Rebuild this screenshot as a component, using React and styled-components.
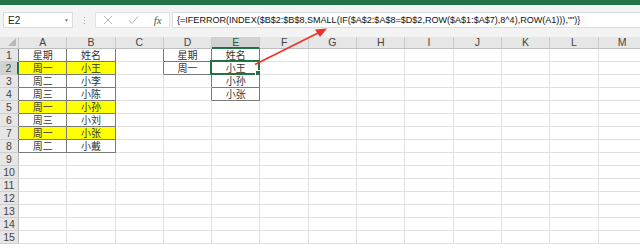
import React from 'react';
import styled, { createGlobalStyle } from 'styled-components';

const GlobalStyle = createGlobalStyle`
  html, body {
    margin: 0;
    padding: 0;
    background: #ffffff;
  }
  body {
    font-family: 'Liberation Sans', 'Noto Sans CJK SC', sans-serif;
  }
`;

const COL_W = 48.3;
const ROW_H = 13;
const COLS = ['A', 'B', 'C', 'D', 'E', 'F', 'G', 'H', 'I', 'J', 'K', 'L', 'M'];
const ROWS = 15;

// cell contents keyed by "A1" style address
const cells = {
  A1: '星期', B1: '姓名',
  A2: '周一', B2: '小王',
  A3: '周二', B3: '小李',
  A4: '周三', B4: '小陈',
  A5: '周一', B5: '小孙',
  A6: '周三', B6: '小刘',
  A7: '周一', B7: '小张',
  A8: '周二', B8: '小戴',
  D1: '星期', D2: '周一',
  E1: '姓名', E2: '小王', E3: '小孙', E4: '小张',
};

const yellowRows = [2, 5, 7];

const isBoxed = (r, c) => {
  if (c < 0 || r < 1) return false;
  if ((c === 0 || c === 1) && r >= 1 && r <= 8) return true;
  if (c === 3 && r >= 1 && r <= 2) return true;
  if (c === 4 && r >= 1 && r <= 4) return true;
  return false;
};

const Page = styled.div`
  position: relative;
  width: 640px;
  height: 249px;
  overflow: hidden;
  background: #ffffff;
`;

const TitleStrip = styled.div`
  height: 5px;
  background: #217346;
`;

const Toolbar = styled.div`
  display: flex;
  align-items: center;
  height: 30px;
  padding: 0 0 0 3px;
  background: #f3f3f3;
`;

const NameBox = styled.div`
  display: flex;
  align-items: center;
  justify-content: space-between;
  width: 70px;
  height: 16px;
  box-sizing: border-box;
  padding: 0 3px 0 4px;
  background: #ffffff;
  border: 1px solid #dcdcdc;
  font-size: 10px;
  color: #222;
`;

const Caret = styled.span`
  font-size: 5px;
  color: #777;
`;

const Grip = styled.div`
  width: 22px;
  display: flex;
  flex-direction: column;
  align-items: center;
  gap: 2px;
  & > i {
    display: block;
    width: 1px;
    height: 1px;
    background: #a8a8a8;
  }
`;

const ButtonBox = styled.div`
  display: flex;
  align-items: center;
  justify-content: space-around;
  width: 75px;
  height: 16px;
  box-sizing: border-box;
  background: #ffffff;
  border: 1px solid #e2e2e2;
  margin-right: 2px;
`;

const Fx = styled.span`
  font-family: 'Liberation Serif', serif;
  font-style: italic;
  font-size: 11px;
  color: #555;
`;

const FormulaBox = styled.div`
  flex: 1;
  height: 16px;
  box-sizing: border-box;
  display: flex;
  align-items: center;
  padding-left: 4px;
  background: #ffffff;
  border: 1px solid #dcdcdc;
  border-right: none;
  font-size: 9.05px;
  color: #111;
  white-space: nowrap;
  overflow: hidden;
`;

const Gap = styled.div`
  height: 2px;
  background: #f3f3f3;
`;

const Sheet = styled.div`
  display: grid;
  grid-template-columns: 19px repeat(${COLS.length}, ${COL_W}px);
  grid-template-rows: 12px repeat(${ROWS}, ${ROW_H}px);
`;

const Corner = styled.div`
  position: relative;
  background: #e6e6e6;
  border-right: 1px solid #c8c8c8;
  border-bottom: 1px solid #bdbdbd;
  &::after {
    content: '';
    position: absolute;
    right: 2px;
    bottom: 2px;
    border-left: 8px solid transparent;
    border-bottom: 8px solid #b9b9b9;
  }
`;

const ColHead = styled.div`
  display: flex;
  align-items: center;
  justify-content: center;
  box-sizing: border-box;
  line-height: 1;
  font-size: 10.5px;
  color: ${(p) => (p.active ? '#1d5e38' : '#444')};
  background: ${(p) => (p.active ? '#d2d2d2' : '#e6e6e6')};
  border-right: 1px solid #cbcbcb;
  border-bottom: ${(p) => (p.active ? '2px solid #217346' : '1px solid #bdbdbd')};
`;

const RowHead = styled.div`
  display: flex;
  align-items: center;
  justify-content: center;
  box-sizing: border-box;
  line-height: 1;
  font-size: 10.5px;
  color: ${(p) => (p.active ? '#1d5e38' : '#444')};
  background: ${(p) => (p.active ? '#d2d2d2' : '#e6e6e6')};
  border-bottom: 1px solid #cfcfcf;
  border-right: ${(p) =>
    p.active ? '2px solid #217346' : p.dark ? '1px solid #7a7a7a' : '1px solid #bdbdbd'};
`;

const Cell = styled.div`
  position: relative;
  display: flex;
  align-items: center;
  justify-content: center;
  box-sizing: border-box;
  line-height: 1;
  font-family: 'Noto Sans CJK SC', 'Liberation Sans', sans-serif;
  font-size: 10px;
  color: #333;
  background: ${(p) => (p.yellow ? '#ffff00' : '#ffffff')};
  border-right: 1px solid ${(p) => (p.darkRight ? '#7a7a7a' : '#e1e1e1')};
  border-bottom: 1px solid ${(p) => (p.darkBottom ? '#7a7a7a' : '#e1e1e1')};
`;

const Selection = styled.div`
  position: absolute;
  left: -2px;
  top: -2px;
  right: -1px;
  bottom: -1px;
  border: 2px solid #217346;
  pointer-events: none;
  &::after {
    content: '';
    position: absolute;
    right: -4px;
    bottom: -4px;
    width: 5px;
    height: 5px;
    background: #217346;
    border: 1px solid #ffffff;
  }
`;

const ArrowLayer = styled.svg`
  position: absolute;
  left: 0;
  top: 0;
  pointer-events: none;
`;

const XIcon = () => (
  <svg width="10" height="10" viewBox="0 0 10 10">
    <path d="M1 1L9 9M9 1L1 9" stroke="#b4b4b4" strokeWidth="1" fill="none" />
  </svg>
);

const CheckIcon = () => (
  <svg width="11" height="10" viewBox="0 0 11 10">
    <path d="M1 5.5L4 8.5L10 1.5" stroke="#b4b4b4" strokeWidth="1" fill="none" />
  </svg>
);

export default function App() {
  const body = [];
  for (let r = 1; r <= ROWS; r++) {
    body.push(
      <RowHead key={`r${r}`} active={r === 2} dark={isBoxed(r, 0)}>
        {r}
      </RowHead>
    );
    COLS.forEach((col, c) => {
      const addr = `${col}${r}`;
      const yellow = c <= 1 && yellowRows.includes(r);
      body.push(
        <Cell
          key={addr}
          yellow={yellow}
          darkRight={isBoxed(r, c) || isBoxed(r, c + 1)}
          darkBottom={isBoxed(r, c) || isBoxed(r + 1, c)}
        >
          {cells[addr]}
          {addr === 'E2' && <Selection />}
        </Cell>
      );
    });
  }

  return (
    <Page>
      <GlobalStyle />
      <TitleStrip />
      <Toolbar>
        <NameBox>
          E2
          <Caret>▼</Caret>
        </NameBox>
        <Grip>
          <i />
          <i />
          <i />
        </Grip>
        <ButtonBox>
          <XIcon />
          <CheckIcon />
          <Fx>fx</Fx>
        </ButtonBox>
        <FormulaBox>
          {'{=IFERROR(INDEX($B$2:$B$8,SMALL(IF($A$2:$A$8=$D$2,ROW($A$1:$A$7),8^4),ROW(A1))),"")}'}
        </FormulaBox>
      </Toolbar>
      <Gap />
      <Sheet>
        <Corner />
        {COLS.map((col, c) => (
          <ColHead key={col} active={col === 'E'}>
            {col}
          </ColHead>
        ))}
        {body}
      </Sheet>
      <ArrowLayer width="640" height="249" viewBox="0 0 640 249">
        <line x1="255" y1="64.5" x2="318" y2="33" stroke="#f0302a" strokeWidth="1.6" />
        <polygon points="327,28.5 315,29.5 320,37" fill="#f0302a" />
      </ArrowLayer>
    </Page>
  );
}
